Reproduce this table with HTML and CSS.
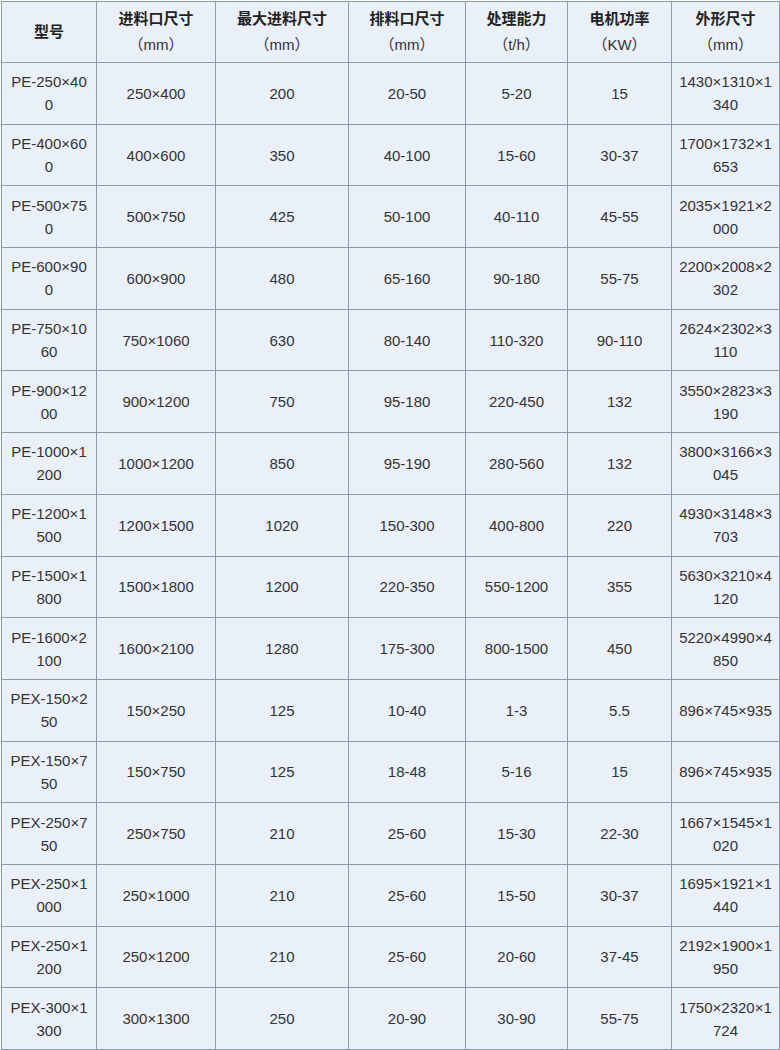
FILE: index.html
```html
<!DOCTYPE html>
<html lang="zh">
<head>
<meta charset="utf-8">
<link rel="stylesheet" href="styles.css">
</head>
<body>
<table class="spec">
<colgroup>
<col class="c1"><col class="c2"><col class="c3"><col class="c4"><col class="c5"><col class="c6"><col class="c7">
</colgroup>
<thead>
<tr>
<th>型号</th>
<th>进料口尺寸<br><span class="unit">（mm）</span></th>
<th>最大进料尺寸<br><span class="unit">（mm）</span></th>
<th>排料口尺寸<br><span class="unit">（mm）</span></th>
<th>处理能力<br><span class="unit">（t/h）</span></th>
<th>电机功率<br><span class="unit">（KW）</span></th>
<th>外形尺寸<br><span class="unit">（mm）</span></th>
</tr>
</thead>
<tbody>
<tr><td>PE-250×400</td><td>250×400</td><td>200</td><td>20-50</td><td>5-20</td><td>15</td><td>1430×1310×1340</td></tr>
<tr><td>PE-400×600</td><td>400×600</td><td>350</td><td>40-100</td><td>15-60</td><td>30-37</td><td>1700×1732×1653</td></tr>
<tr><td>PE-500×750</td><td>500×750</td><td>425</td><td>50-100</td><td>40-110</td><td>45-55</td><td>2035×1921×2000</td></tr>
<tr><td>PE-600×900</td><td>600×900</td><td>480</td><td>65-160</td><td>90-180</td><td>55-75</td><td>2200×2008×2302</td></tr>
<tr><td>PE-750×1060</td><td>750×1060</td><td>630</td><td>80-140</td><td>110-320</td><td>90-110</td><td>2624×2302×3110</td></tr>
<tr><td>PE-900×1200</td><td>900×1200</td><td>750</td><td>95-180</td><td>220-450</td><td>132</td><td>3550×2823×3190</td></tr>
<tr><td>PE-1000×1200</td><td>1000×1200</td><td>850</td><td>95-190</td><td>280-560</td><td>132</td><td>3800×3166×3045</td></tr>
<tr><td>PE-1200×1500</td><td>1200×1500</td><td>1020</td><td>150-300</td><td>400-800</td><td>220</td><td>4930×3148×3703</td></tr>
<tr><td>PE-1500×1800</td><td>1500×1800</td><td>1200</td><td>220-350</td><td>550-1200</td><td>355</td><td>5630×3210×4120</td></tr>
<tr><td>PE-1600×2100</td><td>1600×2100</td><td>1280</td><td>175-300</td><td>800-1500</td><td>450</td><td>5220×4990×4850</td></tr>
<tr><td>PEX-150×250</td><td>150×250</td><td>125</td><td>10-40</td><td>1-3</td><td>5.5</td><td>896×745×935</td></tr>
<tr><td>PEX-150×750</td><td>150×750</td><td>125</td><td>18-48</td><td>5-16</td><td>15</td><td>896×745×935</td></tr>
<tr><td>PEX-250×750</td><td>250×750</td><td>210</td><td>25-60</td><td>15-30</td><td>22-30</td><td>1667×1545×1020</td></tr>
<tr><td>PEX-250×1000</td><td>250×1000</td><td>210</td><td>25-60</td><td>15-50</td><td>30-37</td><td>1695×1921×1440</td></tr>
<tr><td>PEX-250×1200</td><td>250×1200</td><td>210</td><td>25-60</td><td>20-60</td><td>37-45</td><td>2192×1900×1950</td></tr>
<tr><td>PEX-300×1300</td><td>300×1300</td><td>250</td><td>20-90</td><td>30-90</td><td>55-75</td><td>1750×2320×1724</td></tr>
</tbody>
</table>
</body>
</html>
```

FILE: styles.css
```css
html, body {
  margin: 0;
  padding: 0;
  background: #ffffff;
}
body {
  padding: 1px 0 0 1px;
}
.spec {
  border-collapse: collapse;
  table-layout: fixed;
  width: 778px;
  background: #eaf0f8;
  font-family: "Liberation Sans", Arial, "Noto Sans CJK SC", sans-serif;
  font-size: 15px;
  color: #333333;
}
.c1 { width: 95px; }
.c2 { width: 119px; }
.c3 { width: 133px; }
.c4 { width: 117px; }
.c5 { width: 102px; }
.c6 { width: 104px; }
.c7 { width: 108px; }
.spec th,
.spec td {
  border: 1px solid #8c9aab;
  text-align: center;
  vertical-align: middle;
  padding: 0 6px;
  word-break: break-all;
  overflow-wrap: anywhere;
}
.spec thead tr {
  height: 61px;
}
.spec tbody tr {
  height: 61.7px;
}
.spec th {
  font-family: "Liberation Sans", Arial, "Noto Sans CJK SC", sans-serif;
  font-weight: bold;
  color: #222222;
  line-height: 26px;
}
.spec th .unit {
  font-weight: normal;
  color: #333333;
}
.spec td {
  line-height: 23px;
}
```
